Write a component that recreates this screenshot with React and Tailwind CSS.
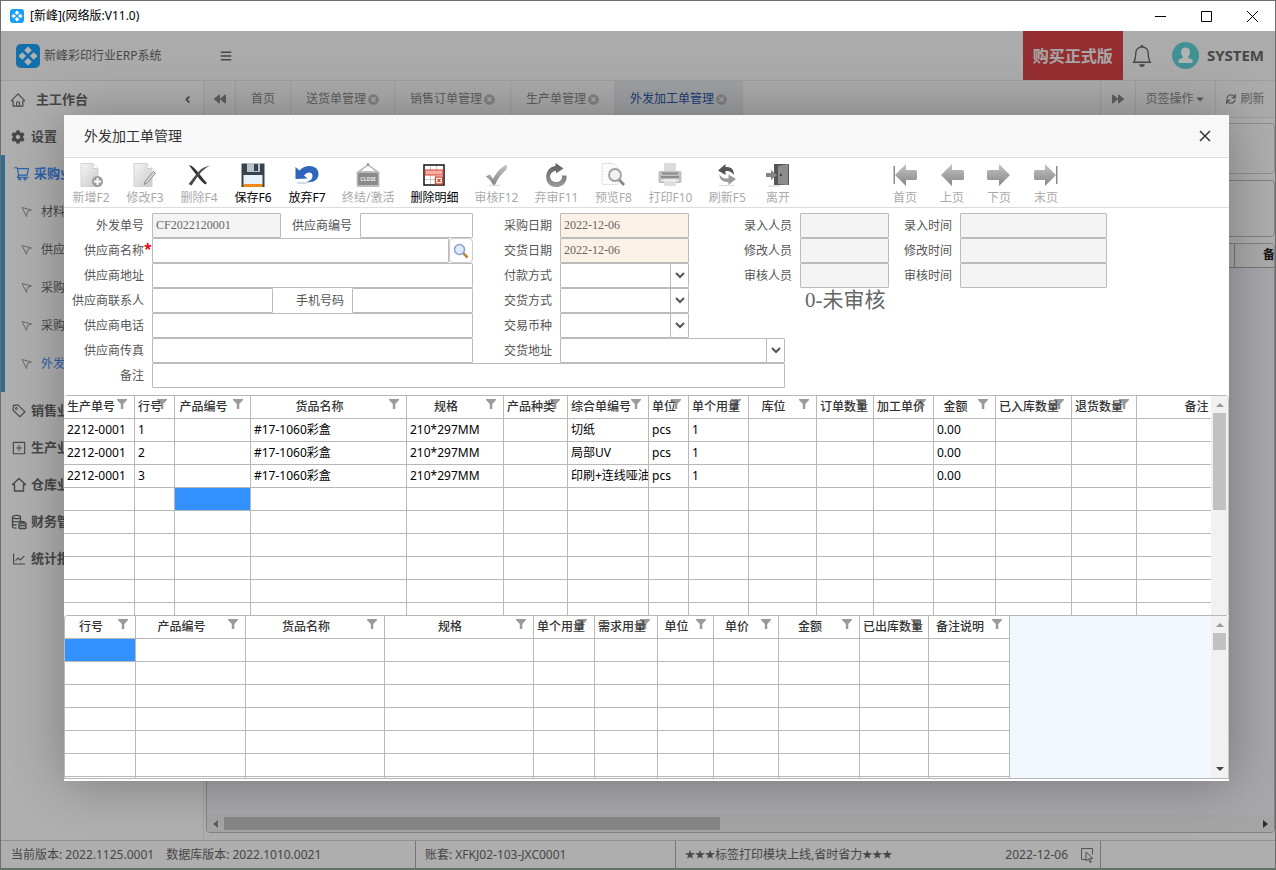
import React, { useState } from "react";
import {
  AiOutlineHome,
  AiOutlineShoppingCart,
  AiOutlineTag,
  AiOutlinePlusSquare,
  AiOutlineLineChart,
} from "react-icons/ai";
import {
  FaCog,
  FaBars,
  FaBackward,
  FaForward,
  FaCaretDown,
  FaTimesCircle,
  FaAngleLeft,
  FaSync,
} from "react-icons/fa";
import { BsBell } from "react-icons/bs";

const Logo = ({ className }) => (
  <svg viewBox="0 0 24 24" className={className}>
    <rect width="24" height="24" rx="5" fill="#1a9ff5" />
    <g fill="#fff">
      <path d="M12 2.500l3.800 3.800L12 10.100 8.200 6.300z" />
      <path d="M12 13.900l3.800 3.800-3.800 3.800-3.800-3.800z" />
      <path d="M6.300 8.200l3.800 3.800-3.800 3.800L2.500 12z" />
      <path d="M17.700 8.200l3.800 3.800-3.800 3.800-3.800-3.800z" />
    </g>
  </svg>
);

const PointerIcon = () => (
  <svg viewBox="0 0 12 12" className="w-3 h-3" fill="none" stroke="#999">
    <path d="M1 1.500l9.500 2.500-4 1.500-1 5z" />
  </svg>
);

// pentagon house, drawn without a base line overhang
const StoreIcon = () => (
  <svg
    viewBox="0 0 16 16"
    className="w-4 h-4"
    fill="none"
    stroke="currentColor"
    strokeWidth="1.4"
  >
    <path d="M8 1.500l6.500 6h-2v6.500h-9V7.500h-2z" strokeLinejoin="round" />
  </svg>
);

const FinanceIcon = () => (
  <svg
    viewBox="0 0 16 16"
    className="w-4 h-4"
    fill="none"
    stroke="currentColor"
    strokeWidth="1.3"
  >
    <ellipse cx="5.500" cy="3" rx="4" ry="1.700" />
    <path d="M1.500 3v9.500c0 .9 1.800 1.600 4 1.600M9.500 3v4M1.500 6.200c0 .9 1.800 1.600 4 1.600s4-.7 4-1.600M1.500 9.400c0 .9 1.800 1.600 4 1.600" />
    <rect x="8" y="9" width="7" height="5.500" rx=".8" />
    <path d="M10 9V7.600h3V9M8 11.500h7" />
  </svg>
);

const FilterIcon = () => (
  <svg viewBox="0 0 10 11" className="w-2.5 h-[11px]">
    <path d="M0 0h10v1L6.300 5v5H3.800V5L0 1z" fill="#9a9a9a" />
  </svg>
);

const Defs = () => (
  <svg className="absolute w-0 h-0">
    <defs>
      <linearGradient id="steel" x1="0" y1="0" x2="0" y2="1">
        <stop offset="0" stopColor="#c4c4c4" />
        <stop offset="1" stopColor="#868686" />
      </linearGradient>
      <linearGradient id="paper" x1="0" y1="0" x2="1" y2="1">
        <stop offset="0" stopColor="#f4f4f4" />
        <stop offset="1" stopColor="#cbcbcb" />
      </linearGradient>
      <linearGradient id="dark" x1="0" y1="0" x2="0" y2="1">
        <stop offset="0" stopColor="#5c5c5c" />
        <stop offset="1" stopColor="#9c9c9c" />
      </linearGradient>
    </defs>
  </svg>
);

const icons = {
  add: (
    <>
      <path d="M2 .5h12l5 5v18H2z" fill="url(#paper)" stroke="#d2d2d2" />
      <path d="M14 .5v5h5" fill="#fff" stroke="#cfcfcf" />
      <circle cx="18.500" cy="18.500" r="5.500" fill="#9d9d9d" />
      <path d="M18.500 15v7M15 18.500h7" stroke="#fff" strokeWidth="2" />
    </>
  ),
  edit: (
    <>
      <path d="M1 .5h13l5 5v18H1z" fill="url(#paper)" stroke="#d2d2d2" />
      <path d="M14 .5v5h5" fill="#fff" stroke="#cfcfcf" />
      <path d="M20.500 8.500l2 1.800-8.200 9.400-3.300 2 1.400-3.600z" fill="#ddd" stroke="#888" />
    </>
  ),
  remove: (
    <>
      <path d="M2 2C6 3 8.500 6 12 10.500S18 18 20 20l-2 1.500C14 18 12 15.500 9 11.500S4 5 2 2z" fill="#333" />
      <path d="M23 2.500C17 6 14 9 11 13S7 19 4.500 22.500L1.500 21C5 17 7 14 10 10.500S16 4 23 2.500z" fill="#4a4a4a" />
    </>
  ),
  save: (
    <>
      <path d="M.5.500h23V24H.5z" fill="#39434d" />
      <path d="M6 0h13v9H6z" fill="#b9c3cb" />
      <path d="M13 1h4v7h-4z" fill="#39434d" />
      <path d="M2.500 12h19v10h-19z" fill="#e6f1fa" />
      <path d="M2.500 21h19v3h-19z" fill="#f08a1c" />
    </>
  ),
  undo: (
    <>
      <path
        d="M.5 4v12l12-.5-3.500-3C12 8.500 17.500 8.500 17.500 13c0 3.500-3 5-6 6C18 20 23.500 17 23.500 11 23.500 2 11 .5 4.500 7.500z"
        fill="#2e66bd"
      />
      <path d="M2 20h10" stroke="#c6d2e6" strokeWidth="1.500" />
    </>
  ),
  closed: (
    <>
      <path d="M2 9l10-7 10 7" fill="none" stroke="#a9a9a9" strokeWidth="1.200" />
      <circle cx="12" cy="1.500" r="1.300" fill="#8f8f8f" />
      <rect x=".5" y="8" width="23" height="16" rx="1.500" fill="#bcbcbc" />
      <rect x="2" y="10" width="20" height="12" rx="1" fill="#8a8a8a" />
      <text x="12" y="18" fontSize="5" fontWeight="700" textAnchor="middle" fill="#eee">
        CLOSE
      </text>
    </>
  ),
  removeRow: (
    <>
      <rect x="2" y="2" width="20" height="20" fill="#fff" stroke="#111" strokeWidth="1.500" />
      <path d="M8.500 3v18M14.500 3v18M3 16.500h18" stroke="#ccc" />
      <path d="M3 7h18v5H3z" fill="#f4b0a2" stroke="#d9402a" />
      <rect x="13.500" y="14" width="7" height="7" fill="#fff" stroke="#d9402a" strokeWidth="1.300" />
      <path d="M15.500 16l3 3M18.500 16l-3 3" stroke="#d9402a" strokeWidth="1.300" />
    </>
  ),
  check: (
    <>
      <path
        d="M1.500 13.500l4.500-2 3 4.500C12 10 16 5 22.500 1.500 23 4 23 5 22 7c-5 4-8.500 9-11 15H9c-2-4-4.500-7-7.500-8.500z"
        fill="url(#steel)"
      />
      <path d="M5 22.500h11" stroke="#ddd" strokeWidth="1.500" />
    </>
  ),
  uncheck: (
    <path
      d="M11.500 0l8 5.500-7.500 5V8C4 8.500 4.500 19 12 19c4 0 6.500-3 6-6.500h4.500C23.500 18.500 19 24 12 24-1 24-1 4.500 11.500 3z"
      fill="url(#dark)"
    />
  ),
  preview: (
    <>
      <path d="M1 .5h12l4 4v17H1z" fill="#fbfbfb" stroke="#d5d5d5" strokeDasharray="2 1" />
      <circle cx="14" cy="12" r="6" fill="#f1f1f1" stroke="#a0a0a0" strokeWidth="1.800" />
      <path d="M18.500 17l4.500 5" stroke="#888" strokeWidth="2.800" />
    </>
  ),
  print: (
    <>
      <path d="M6 0h12v9H6z" fill="#dcdcdc" />
      <rect x=".5" y="8" width="23" height="12" rx="1.500" fill="#c0c0c0" />
      <path d="M4 10.500h16M3 14h18" stroke="#8c8c8c" strokeWidth="1.800" />
      <path d="M6 16h12v7H6z" fill="#dedede" />
      <path d="M3 17.500h18" stroke="#f2f2f2" strokeWidth="1.500" />
    </>
  ),
  refresh: (
    <>
      <path d="M3 7.500L10.500 1v3c6-.5 8.500 2.500 8.500 8-2.500-3.500-5-4-8.500-4v4z" fill="#555" />
      <path d="M21 16l-7.500 6v-3c-6 0-9-2-9-7.500 2.500 3.500 5 4.500 9 4v-4z" fill="#9a9a9a" />
      <path d="M4 22.500h15" stroke="#ddd" />
    </>
  ),
  exit: (
    <>
      <path d="M8 1h15v21H8z" fill="#555" />
      <path d="M12 3l10-2v21l-10-1z" fill="#8d8d8d" />
      <circle cx="15" cy="12" r="1.200" fill="#444" />
      <path d="M0 10h5V7l6 5-6 5v-3H0z" fill="#858585" />
      <path d="M2 23h12" stroke="#ccc" />
    </>
  ),
  first: (
    <>
      <path d="M.5 3H2v18H.5z" fill="#8a8a8a" />
      <path d="M2 12L13 1v6h9.500Q24 7 24 8.500v7q0 1.500-1.500 1.500H13v6z" fill="url(#steel)" />
    </>
  ),
  prev: (
    <path d="M1 12L12 1v6h10.500Q24 7 24 8.500v7q0 1.500-1.500 1.500H12v6z" fill="url(#steel)" />
  ),
  next: (
    <path d="M23 12L12 1v6H1.500Q0 7 0 8.500v7Q0 17 1.500 17H12v6z" fill="url(#steel)" />
  ),
  last: (
    <>
      <path d="M22 3h1.500v18H22z" fill="#8a8a8a" />
      <path d="M22 12L11 1v6H1.500Q0 7 0 8.500v7Q0 17 1.500 17H11v6z" fill="url(#steel)" />
    </>
  ),
};

const tools = [
  { icon: "add", label: "新增F2" },
  { icon: "edit", label: "修改F3" },
  { icon: "remove", label: "删除F4" },
  { icon: "save", label: "保存F6", on: true },
  { icon: "undo", label: "放弃F7", on: true },
  { icon: "closed", label: "终结/激活" },
  { icon: "removeRow", label: "删除明细", on: true },
  { icon: "check", label: "审核F12" },
  { icon: "uncheck", label: "弃审F11" },
  { icon: "preview", label: "预览F8" },
  { icon: "print", label: "打印F10" },
  { icon: "refresh", label: "刷新F5" },
  { icon: "exit", label: "离开" },
];

const pagers = [
  { icon: "first", label: "首页" },
  { icon: "prev", label: "上页" },
  { icon: "next", label: "下页" },
  { icon: "last", label: "末页" },
];

const subMenu = ["材料采购", "供应商资料", "采购订单", "采购入库", "外发加工单"];

const lowerMenu = [
  { icon: <AiOutlineTag size={16} className="-scale-x-100" />, label: "销售业务" },
  { icon: <AiOutlinePlusSquare size={16} />, label: "生产业务" },
  { icon: <StoreIcon />, label: "仓库业务" },
  { icon: <FinanceIcon />, label: "财务管理" },
  { icon: <AiOutlineLineChart size={16} />, label: "统计报表" },
];

const tabs = ["送货单管理", "销售订单管理", "生产单管理", "外发加工单管理"];

const orderColumns = [
  ["生产单号", 71],
  ["行号", 40],
  ["产品编号", 76],
  ["货品名称", 156],
  ["规格", 97],
  ["产品种类", 64],
  ["综合单编号", 81],
  ["单位", 40],
  ["单个用量", 60],
  ["库位", 68],
  ["订单数量", 57],
  ["加工单价", 60],
  ["金额", 62],
  ["已入库数量", 76],
  ["退货数量", 65],
  ["备注", 138],
];

const orderRow = (no, work) => [
  "2212-0001", no, "", "#17-1060彩盒", "210*297MM", "", work, "pcs", "1",
  "", "", "", "0.00", "", "", "",
];

const orderRows = [
  orderRow("1", "切纸"),
  orderRow("2", "局部UV"),
  orderRow("3", "印刷+连线哑油"),
];

const stockColumns = [
  ["行号", 71],
  ["产品编号", 110],
  ["货品名称", 139],
  ["规格", 149],
  ["单个用量", 61],
  ["需求用量", 63],
  ["单位", 56],
  ["单价", 65],
  ["金额", 81],
  ["已出库数量", 69],
  ["备注说明", 81],
];

const ToolButton = ({ item }) => (
  <button
    disabled={!item.on}
    className={`flex flex-col items-center gap-[3px] text-xs leading-4 whitespace-nowrap ${
      item.label.length > 2 ? "min-w-[38px]" : "min-w-[31px]"
    } ${item.on ? "text-black" : "text-[#aaa]"}`}
  >
    <svg viewBox="0 0 24 24" className="w-6 h-6">
      {icons[item.icon]}
    </svg>
    {item.label}
  </button>
);

const fieldBase =
  "h-[25px] border border-[#bbb] rounded-[1px] px-[3px] text-xs text-[#666] font-['Liberation_Serif','Noto_Sans_CJK_SC',serif]";

const Field = ({ id, label, labelWidth, width, value, tone, required }) => (
  <div className="flex items-center">
    <label
      htmlFor={id}
      className={`relative shrink-0 mr-2 text-right whitespace-nowrap ${labelWidth}`}
    >
      {label}
      {required && (
        <span className="absolute left-full bottom-0 font-bold text-sm text-red-600">
          *
        </span>
      )}
    </label>
    <input
      id={id}
      defaultValue={value}
      readOnly={tone === "bg-[#f4f4f4]"}
      className={`${fieldBase} ${width} ${tone || "bg-white"}`}
    />
  </div>
);

const SelectField = ({ id, label, labelWidth, width }) => (
  <div className="flex items-center">
    <label htmlFor={id} className={`shrink-0 mr-2 text-right ${labelWidth}`}>
      {label}
    </label>
    <div className={`relative ${width}`}>
      <select id={id} className={`${fieldBase} block w-full bg-white appearance-none`}>
        <option></option>
      </select>
      <span className="absolute right-px inset-y-px w-[18px] flex items-center justify-center border-l border-[#bbb] pointer-events-none">
        <svg viewBox="0 0 10 7" className="w-2.5 h-[7px]" fill="none" stroke="#555" strokeWidth="2">
          <path d="M1 1l4 4 4-4" />
        </svg>
      </span>
    </div>
  </div>
);

const DataGrid = ({ columns, rows, blank, selected, onSelect }) => {
  const width = columns.reduce((sum, c) => sum + c[1], 0);
  const blanks = Array.from({ length: blank }, () => columns.map(() => ""));
  const all = [...rows, ...blanks];

  return (
    <table
      className="table-fixed border-separate border-spacing-0 bg-white text-xs text-black"
      style={{ width }}
    >
      <colgroup>
        {columns.map((c) => (
          <col key={c[0]} style={{ width: c[1] }} />
        ))}
      </colgroup>
      <thead>
        <tr>
          {columns.map((c) => (
            <th
              key={c[0]}
              className="relative h-[23px] p-0 pl-[3px] pr-[21px] border-r border-b border-[#b8b8b8] font-medium text-[#333] leading-4 whitespace-nowrap text-center"
            >
              <span className="absolute right-[7px] top-[3px]">
                <FilterIcon />
              </span>
              <span className="relative">{c[0]}</span>
            </th>
          ))}
        </tr>
      </thead>
      <tbody>
        {all.map((row, r) => (
          <tr key={r}>
            {row.map((cell, c) => (
              <td
                key={c}
                onClick={() => onSelect([r, c])}
                className={`h-[23px] p-0 pl-[3px] border-r border-b border-[#b8b8b8] leading-4 whitespace-nowrap overflow-hidden ${
                  selected[0] === r && selected[1] === c ? "bg-[#3390ff]" : ""
                }`}
              >
                {cell}
              </td>
            ))}
          </tr>
        ))}
      </tbody>
    </table>
  );
};

const ScrollBar = ({ thumb, down }) => (
  <div className="w-[18px] shrink-0 flex flex-col items-center bg-[#f1f1f1] border-r border-[#c8c8c8]">
    <span className="h-[17px] flex items-center">
      <svg viewBox="0 0 8 4" className="w-2 h-1">
        <path d="M4 0l4 4H0z" fill="#999" />
      </svg>
    </span>
    <span className={`w-[13px] bg-[#c1c1c1] ${thumb}`} />
    {down && (
      <span className="mt-auto h-[19px] flex items-center">
        <svg viewBox="0 0 8 4" className="w-2 h-1">
          <path d="M0 0h8L4 4z" fill="#444" />
        </svg>
      </span>
    )}
  </div>
);

const OrderDialog = () => {
  const [orderCell, setOrderCell] = useState([3, 2]);
  const [stockCell, setStockCell] = useState([0, 0]);
  const grey = "bg-[#f4f4f4]";
  const cream = "bg-[#fbf1e6]";

  return (
    <div
      role="dialog"
      className="flex-1 min-w-0 flex flex-col bg-white shadow-[1px_1px_50px_rgba(0,0,0,0.3)]"
    >
      <div className="h-[42px] shrink-0 flex items-center justify-between pl-5 pr-[18px] bg-[#f8f8f8] text-sm text-[#333]">
        <h2>外发加工单管理</h2>
        <button aria-label="关闭">
          <svg viewBox="0 0 12 12" className="w-3 h-3" stroke="#333" strokeWidth="1.5">
            <path d="M1 1l10 10M11 1L1 11" />
          </svg>
        </button>
      </div>

      <div className="h-[51px] shrink-0 flex items-start gap-4 pt-[5px] pl-2 border-y border-[#ddd] overflow-hidden">
        {tools.map((t) => (
          <ToolButton key={t.label} item={t} />
        ))}
        <div className="flex gap-4 ml-20">
          {pagers.map((t) => (
            <ToolButton key={t.label} item={t} />
          ))}
        </div>
      </div>

      <form className="shrink-0 pt-[5px] pb-[7px] text-xs text-[#555]">
        <div className="flex">
          <div className="shrink-0">
            <div className="flex">
              <Field id="no" label="外发单号" labelWidth="w-20" width="w-[129px]" value="CF2022120001" tone={grey} />
              <Field id="vno" label="供应商编号" labelWidth="w-[71px]" width="w-[113px]" />
            </div>
            <div className="flex">
              <Field id="vname" label="供应商名称" labelWidth="w-20" width="w-[297px]" required />
              <button
                type="button"
                aria-label="查找"
                className="w-6 h-[25px] flex items-center justify-center border border-[#ccc] rounded-sm"
              >
                <svg viewBox="0 0 16 16" className="w-4 h-4" fill="none">
                  <path d="M10 10l4.500 4.500" stroke="#b8862f" strokeWidth="2.500" />
                  <circle cx="6.500" cy="6.500" r="5" fill="#dcebfb" stroke="#8aa2d0" strokeWidth="1.500" />
                </svg>
              </button>
            </div>
            <Field id="vaddr" label="供应商地址" labelWidth="w-20" width="w-[321px]" />
            <div className="flex">
              <Field id="vcontact" label="供应商联系人" labelWidth="w-20" width="w-[121px]" />
              <Field id="vmobile" label="手机号码" labelWidth="w-[71px]" width="w-[121px]" />
            </div>
            <Field id="vtel" label="供应商电话" labelWidth="w-20" width="w-[321px]" />
            <Field id="vfax" label="供应商传真" labelWidth="w-20" width="w-[321px]" />
          </div>

          <div className="shrink-0">
            <div className="flex items-start">
              <div>
                <Field id="buydate" label="采购日期" labelWidth="w-[79px]" width="w-[129px]" value="2022-12-06" tone={cream} />
                <Field id="duedate" label="交货日期" labelWidth="w-[79px]" width="w-[129px]" value="2022-12-06" tone={cream} />
                <SelectField id="pay" label="付款方式" labelWidth="w-[79px]" width="w-[129px]" />
                <SelectField id="ship" label="交货方式" labelWidth="w-[79px]" width="w-[129px]" />
              </div>
              <div>
                <div className="flex">
                  <div>
                    <Field id="u1" label="录入人员" labelWidth="w-[103px]" width="w-[89px]" tone={grey} />
                    <Field id="u2" label="修改人员" labelWidth="w-[103px]" width="w-[89px]" tone={grey} />
                    <Field id="u3" label="审核人员" labelWidth="w-[103px]" width="w-[89px]" tone={grey} />
                  </div>
                  <div>
                    <Field id="t1" label="录入时间" labelWidth="w-[63px]" width="w-[147px]" tone={grey} />
                    <Field id="t2" label="修改时间" labelWidth="w-[63px]" width="w-[147px]" tone={grey} />
                    <Field id="t3" label="审核时间" labelWidth="w-[63px]" width="w-[147px]" tone={grey} />
                  </div>
                </div>
                <p className="h-[25px] pl-[116px] text-[21px] leading-[25px] text-[#666] font-['Liberation_Serif','Noto_Sans_CJK_SC',serif]">
                  0-未审核
                </p>
              </div>
            </div>
            <SelectField id="currency" label="交易币种" labelWidth="w-[79px]" width="w-[129px]" />
            <SelectField id="shipaddr" label="交货地址" labelWidth="w-[79px]" width="w-[225px]" />
          </div>
        </div>
        <Field id="remark" label="备注" labelWidth="w-20" width="w-[633px]" />
      </form>

      <div className="h-[220px] shrink-0 flex border-t border-[#b8b8b8] rounded-t-sm overflow-hidden">
        <div className="flex-1 min-w-0 overflow-hidden bg-[#f2f8ff]">
          <DataGrid
            columns={orderColumns}
            rows={orderRows}
            blank={6}
            selected={orderCell}
            onSelect={setOrderCell}
          />
        </div>
        <ScrollBar thumb="h-[97px]" />
      </div>

      <div className="flex-1 min-h-0 flex mb-0.5 border-y border-l border-[#b8b8b8] rounded-t-sm overflow-hidden">
        <div className="flex-1 min-w-0 overflow-hidden bg-[#f2f8ff]">
          <DataGrid
            columns={stockColumns}
            rows={[]}
            blank={7}
            selected={stockCell}
            onSelect={setStockCell}
          />
        </div>
        <ScrollBar thumb="h-[17px]" down />
      </div>
    </div>
  );
};

const TitleBar = () => (
  <header className="h-[30px] shrink-0 flex items-center bg-white">
    <Logo className="w-3.5 h-3.5 ml-[9px] mr-1.5" />
    <span className="flex-1 text-xs text-black">[新峰](网络版:V11.0)</span>
    {[
      ["最小化", "M0 5.500h11"],
      ["最大化", "M.5.500h10v10H.5z"],
      ["关闭窗口", "M0 0l11 11M11 0L0 11"],
    ].map(([name, d]) => (
      <button key={name} aria-label={name} className="w-[46px] h-full flex items-center justify-center">
        <svg viewBox="0 0 11 11" className="w-[11px] h-[11px]" fill="none" stroke="#000">
          <path d={d} />
        </svg>
      </button>
    ))}
  </header>
);

const AppHeader = () => (
  <div className="h-[50px] shrink-0 flex items-center bg-[#f5f5f5] border-b border-[#e2e2e2] text-[#666]">
    <div className="w-[219px] flex items-center gap-1 pl-[15px] text-xs">
      <Logo className="w-6 h-6" />
      新峰彩印行业ERP系统
    </div>
    <button aria-label="菜单">
      <FaBars size={12} />
    </button>
    <button className="w-[100px] h-full ml-auto bg-[#d64347] text-[#f0f0f0] font-bold text-base">
      购买正式版
    </button>
    <button aria-label="通知" className="ml-2">
      <BsBell size={22} />
    </button>
    <svg viewBox="0 0 27 27" className="w-[27px] h-[27px] ml-[19px]">
      <circle cx="13.500" cy="13.500" r="13.500" fill="#5ccfd5" />
      <path
        d="M13.500 5.500c3 0 4.500 2 4.500 4.500 0 2-.8 3.500-2 4.500l.5 1.500 4 1.800V21H6.500v-3.200l4-1.800.5-1.500c-1.200-1-2-2.500-2-4.500 0-2.500 1.500-4.500 4.500-4.500z"
        fill="#fff"
      />
    </svg>
    <span className="ml-2 mr-[11px] font-bold text-[15px]">SYSTEM</span>
  </div>
);

const SideBar = () => (
  <nav className="w-[203px] shrink-0 border-r border-[#e6e6e6] bg-[#fbfbfb] text-[13px] font-bold text-[#666] whitespace-nowrap">
    <a href="#home" className="h-[37px] flex items-center pl-[9px] pr-2.5">
      <AiOutlineHome size={16} />
      <span className="flex-1 ml-2.5">主工作台</span>
      <FaAngleLeft size={11} />
    </a>
    <a href="#settings" className="h-[37px] flex items-center gap-1.5 pl-2.5">
      <FaCog size={14} />
      设置
    </a>
    <div className="border-l-4 border-[#459cd3] pb-2.5">
      <a href="#purchase" className="h-[37px] flex items-center gap-1 pl-2 text-[#3d8cf5]">
        <AiOutlineShoppingCart size={17} />
        采购业务
      </a>
      {subMenu.map((m, i) => (
        <a
          key={m}
          href={`#sub${i}`}
          className={`h-[38px] flex items-center gap-2 pl-4 pt-0.5 text-xs font-normal ${
            i === subMenu.length - 1 ? "text-[#3d8cf5]" : "text-[#666]"
          }`}
        >
          <PointerIcon />
          {m}
        </a>
      ))}
    </div>
    {lowerMenu.map((m) => (
      <a key={m.label} href={`#${m.label}`} className="h-[37px] flex items-center gap-1 pl-2.5">
        {m.icon}
        {m.label}
      </a>
    ))}
  </nav>
);

const TabBar = () => (
  <div className="h-[37px] shrink-0 flex items-stretch bg-[#f5f5f5] border-b border-[#e0e0e0] text-xs text-[#888] whitespace-nowrap">
    <button aria-label="向左" className="w-8 flex items-center justify-center border-r border-[#e2e2e2]">
      <FaBackward size={12} />
    </button>
    <button className="px-[15px] border-r border-[#e2e2e2]">首页</button>
    {tabs.map((t, i) => (
      <button
        key={t}
        className={`px-[15px] flex items-center gap-0.5 border-r border-[#e2e2e2] ${
          i === tabs.length - 1 ? "bg-[#e4e6ea] text-[#2c56ab]" : ""
        }`}
      >
        {t}
        <FaTimesCircle size={11} color="#bbb" />
      </button>
    ))}
    <button aria-label="向右" className="w-9 ml-auto flex items-center justify-center border-x border-[#e2e2e2]">
      <FaForward size={12} />
    </button>
    <button className="w-20 flex items-center justify-center border-r border-[#e2e2e2]">
      页签操作
      <FaCaretDown size={12} />
    </button>
    <button className="w-[59px] flex items-center justify-center gap-1">
      <FaSync size={10} />
      刷新
    </button>
  </div>
);

const StatusBar = () => (
  <footer className="h-[28px] shrink-0 flex items-stretch border-t border-[#d0d0d0] bg-[#f9f9f9] text-xs text-[#666] leading-[27px] whitespace-nowrap">
    <div className="w-[415px] flex gap-3 pl-2.5 border-r border-[#aaa]">
      <span>当前版本: 2022.1125.0001</span>
      <span>数据库版本: 2022.1010.0021</span>
    </div>
    <div className="w-[260px] pl-[9px] border-r border-[#aaa]">账套: XFKJ02-103-JXC0001</div>
    <div className="w-[425px] flex items-center justify-between pl-[9px] pr-1.5 border-r border-[#aaa]">
      <span className="flex items-center">
        <span className="text-[10px]">★★★</span>
        标签打印模块上线,省时省力
        <span className="text-[10px]">★★★</span>
      </span>
      <span className="flex items-center gap-3">
        2022-12-06
        <svg viewBox="0 0 14 16" className="w-3.5 h-4" fill="none" stroke="#777">
          <path d="M6 12.500H1.500V1.500h11v6" />
          <path d="M6 5l7 6.500H9.500l2 3.500-1.500.5-1.500-3.500L6 14z" />
        </svg>
      </span>
    </div>
  </footer>
);

export default function App() {
  return (
    <div className="h-screen flex flex-col border border-[#6e6e6e] border-b-2 border-b-[#5f7464] overflow-hidden font-['Noto_Sans','Noto_Sans_CJK_SC',sans-serif]">
      <Defs />
      <TitleBar />
      <div className="relative flex-1 min-h-0 flex flex-col">
        <AppHeader />
        <div className="flex-1 min-h-0 flex">
          <SideBar />
          <main className="flex-1 min-w-0 flex flex-col bg-[#fafafa]">
            <TabBar />
            <div className="flex-1 min-h-0 flex flex-col gap-1.5 pt-[5px] pl-0.5 pb-[7px]">
              <div className="h-[51px] shrink-0 border border-[#ccc] rounded-sm" />
              <div className="h-[57px] shrink-0 border border-[#bbb] rounded-sm" />
              <div className="flex-1 min-h-0 flex flex-col border border-[#bbb] rounded-sm bg-[#eff0f6] overflow-hidden">
                <div className="h-6 shrink-0 flex border-b border-[#aaa] bg-[#f5f5f5] text-xs font-bold leading-[22px] text-[#222]">
                  <span className="flex-1 border-r border-[#aaa]" />
                  <span className="w-[39px] pl-7 overflow-hidden">备</span>
                </div>
                <div className="mt-auto h-[17px] flex items-center gap-1.5 px-1.5 bg-[#ededed]">
                  <svg viewBox="0 0 5 8" className="w-[5px] h-2">
                    <path d="M5 0v8L0 4z" fill="#888" />
                  </svg>
                  <div className="flex-1">
                    <div className="w-[48%] h-[13px] bg-[#c1c1c1]" />
                  </div>
                  <svg viewBox="0 0 5 8" className="w-[5px] h-2">
                    <path d="M0 0v8l5-4z" fill="#444" />
                  </svg>
                </div>
              </div>
            </div>
          </main>
        </div>
        <StatusBar />
        <div className="absolute inset-0 flex pt-[84px] pb-[87px] pl-[63px] pr-[46px] bg-black/30">
          <OrderDialog />
        </div>
      </div>
    </div>
  );
}
